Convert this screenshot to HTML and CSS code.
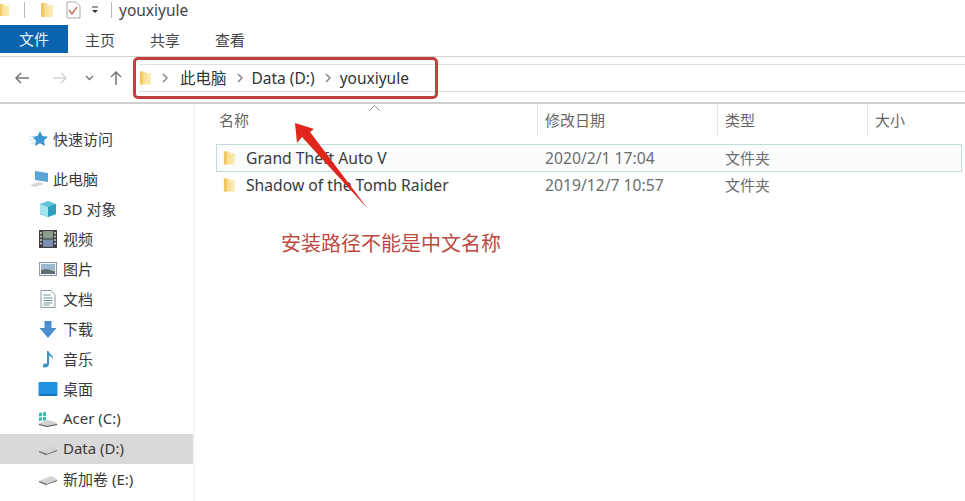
FILE: index.html
```html
<!DOCTYPE html>
<html lang="zh-CN">
<head>
<meta charset="UTF-8">
<meta name="viewport" content="width=device-width, initial-scale=1.0">
<title>youxiyule</title>
<link rel="stylesheet" href="styles.css">
</head>
<body>
  <svg class="defs" width="0" height="0">
    <defs>
      <linearGradient id="folderFill" x1="0" x2="1" y1="0" y2="0">
        <stop offset="0" stop-color="#f5d77e"/>
        <stop offset="1" stop-color="#fbeebb"/>
      </linearGradient>
      <symbol id="folder" viewBox="0 0 14 16">
        <path d="M1 1h6l1 2h5v12H1z" fill="url(#folderFill)"/>
        <path d="M1 1h3v14H1z" fill="#eec55f"/>
      </symbol>
      <symbol id="drive" viewBox="0 0 20 12">
        <path d="M1 8l12-5 6 3v2L8 11z" fill="#d4d4d4"/>
        <path d="M1 8l8 3 10-4v1L8 12 1 9z" fill="#555"/>
      </symbol>
      <symbol id="chev" viewBox="0 0 6 10">
        <path d="M1 1l4 4-4 4" fill="none" stroke="#858585" stroke-width="1.5"/>
      </symbol>
    </defs>
  </svg>

  <header class="titlebar">
    <svg class="qa-folder-cut" width="12" height="16"><use href="#folder"/></svg>
    <span class="qa-sep"></span>
    <svg class="qa-folder" width="14" height="16"><use href="#folder"/></svg>
    <svg class="qa-check" width="15" height="18" viewBox="0 0 15 18">
      <path d="M1 1h9l4 4v12H1z" fill="#fff" stroke="#aaa"/>
      <path d="M3 9l3 4 5-7" fill="none" stroke="#c9735f" stroke-width="1.4"/>
    </svg>
    <svg class="qa-drop" width="8" height="8" viewBox="0 0 8 8">
      <path d="M1 1h6" stroke="#333"/>
      <path d="M1 4h6L4 7z" fill="#333"/>
    </svg>
    <span class="qa-sep"></span>
    <span class="window-title">youxiyule</span>
  </header>

  <nav class="ribbon">
    <span class="tab tab-file">文件</span>
    <span class="tab tab-home">主页</span>
    <span class="tab tab-share">共享</span>
    <span class="tab tab-view">查看</span>
  </nav>

  <div class="addressbar">
    <svg class="nav-btn nav-back" width="16" height="14" viewBox="0 0 16 14">
      <path d="M15 7H2M7 2L2 7l5 5" fill="none" stroke="#777" stroke-width="1.5"/>
    </svg>
    <svg class="nav-btn nav-forward" width="16" height="14" viewBox="0 0 16 14">
      <path d="M1 7h13M9 2l5 5-5 5" fill="none" stroke="#d4d4d4" stroke-width="1.5"/>
    </svg>
    <svg class="nav-btn nav-down" width="9" height="6" viewBox="0 0 9 6">
      <path d="M1 1l3.5 3.500L8 1" fill="none" stroke="#777" stroke-width="1.4"/>
    </svg>
    <svg class="nav-btn nav-up" width="14" height="16" viewBox="0 0 14 16">
      <path d="M7 15V2M2 7l5-5 5 5" fill="none" stroke="#777" stroke-width="1.5"/>
    </svg>
    <div class="crumbs">
      <svg class="crumb-folder" width="13" height="16"><use href="#folder"/></svg>
      <svg class="chev" width="6" height="10"><use href="#chev"/></svg>
      <span class="crumb">此电脑</span>
      <svg class="chev" width="6" height="10"><use href="#chev"/></svg>
      <span class="crumb">Data (D:)</span>
      <svg class="chev" width="6" height="10"><use href="#chev"/></svg>
      <span class="crumb">youxiyule</span>
    </div>
  </div>

  <main class="explorer">
    <aside class="sidebar">
      <div class="nav-item top first">
        <svg class="nav-icon" width="20" height="18" viewBox="0 0 20 18">
          <path d="M11 1l2.400 5 5.600.7-4 3.900 1 5.400-5-2.700-5 2.700 1-5.400-4-3.900 5.600-.7z" fill="#3d97d3"/>
          <path d="M0 7h6M1 10h5M2 13h4" stroke="#bfe0f2"/>
        </svg>
        <span>快速访问</span>
      </div>
      <div class="nav-item top second">
        <svg class="nav-icon" width="20" height="18" viewBox="0 0 20 18">
          <path d="M6 1l13 2v9L6 10z" fill="#5aa5d8"/>
          <path d="M1 15l9-3 5 2-9 3z" fill="#d5d5d5"/>
        </svg>
        <span>此电脑</span>
      </div>
      <div class="nav-item">
        <svg class="nav-icon" width="18" height="18" viewBox="0 0 18 18">
          <path d="M9 1l8 3v10l-8 3-8-3V4z" fill="#5cc3d8"/>
          <path d="M1 4l8 3 8-3v10l-8 3-8-3z" fill="#2f9fbd"/>
          <path d="M1 4l8 3v10l-8-3z" fill="#a5e3ee"/>
        </svg>
        <span>3D 对象</span>
      </div>
      <div class="nav-item">
        <svg class="nav-icon" width="18" height="18" viewBox="0 0 18 18">
          <rect width="18" height="18" fill="#3d3d3d"/>
          <rect x="4" y="1" width="10" height="7.500" fill="#8a9a8c"/>
          <rect x="4" y="9.500" width="10" height="7.500" fill="#7d8fae"/>
          <path d="M2 2v14M16 2v14" stroke="#ddd" stroke-width="1.500" stroke-dasharray="2 1.500"/>
        </svg>
        <span>视频</span>
      </div>
      <div class="nav-item">
        <svg class="nav-icon" width="18" height="14" viewBox="0 0 18 14">
          <rect x=".5" y=".5" width="17" height="13" fill="#f2f5f7" stroke="#8f9aa3"/>
          <rect x="2" y="2" width="14" height="6" fill="#9cb8cf"/>
          <path d="M2 12V8l5-1 9 2v3z" fill="#5c6e70"/>
        </svg>
        <span>图片</span>
      </div>
      <div class="nav-item">
        <svg class="nav-icon" width="15" height="18" viewBox="0 0 15 18">
          <path d="M.5.500h10l4 4v13H.500z" fill="#fafafa" stroke="#8f9aa3"/>
          <path d="M3 5h7M3 8h9M3 10.500h9M3 13h9M3 15h6" stroke="#6e9a96"/>
        </svg>
        <span>文档</span>
      </div>
      <div class="nav-item">
        <svg class="nav-icon" width="17" height="17" viewBox="0 0 17 17">
          <path d="M5 0h7v7h5l-8.500 10L0 7h5z" fill="#4a8fd0"/>
        </svg>
        <span>下载</span>
      </div>
      <div class="nav-item">
        <svg class="nav-icon" width="12" height="18" viewBox="0 0 12 18">
          <path d="M5 1h1.500c.5 3 5 4 4.500 8-1-2-2.500-3-4-3v8.500C6.500 16.500 4.500 18 2.500 17.500 0 17 .500 14 3 13.500c.8-.2 1.500-.1 2 .2z" fill="#3f93c4"/>
        </svg>
        <span>音乐</span>
      </div>
      <div class="nav-item">
        <svg class="nav-icon" width="19" height="14" viewBox="0 0 19 14">
          <rect width="19" height="14" rx="1" fill="#1f8fe0"/>
          <path d="M1 13h17" stroke="#0d4f86"/>
        </svg>
        <span>桌面</span>
      </div>
      <div class="nav-item">
        <svg class="nav-icon" width="20" height="16" viewBox="0 0 20 16">
          <path d="M1 2l3-.5V5L1 5.500zM5 1.300L8 1v4l-3 .200zM1 6.500L4 6v3.500l-3 .500zM5 6h3v3.500L5 9.700z" fill="#3fb8b0"/>
          <path d="M1 12l10-3 8 3v2l-10 2-8-2z" fill="#cfcfcf"/>
          <path d="M1 13l8 2 10-2v1l-10 2-8-2z" fill="#555"/>
        </svg>
        <span>Acer (C:)</span>
      </div>
      <div class="nav-item selected">
        <svg class="nav-icon" width="20" height="12"><use href="#drive"/></svg>
        <span>Data (D:)</span>
      </div>
      <div class="nav-item">
        <svg class="nav-icon" width="20" height="12"><use href="#drive"/></svg>
        <span>新加卷 (E:)</span>
      </div>
    </aside>

    <section class="files">
      <div class="sort-caret">
        <svg width="11" height="6" viewBox="0 0 11 6"><path d="M.5 5.500l5-5 5 5" fill="none" stroke="#888"/></svg>
      </div>
      <div class="file-grid head">
        <span class="col">名称</span>
        <span class="col">修改日期</span>
        <span class="col">类型</span>
        <span class="col">大小</span>
      </div>
      <div class="file-grid row current">
        <span class="file-name"><svg width="13" height="16"><use href="#folder"/></svg>Grand Theft Auto V</span>
        <span class="dim date">2020/2/1 17:04</span>
        <span class="dim kind">文件夹</span>
        <span></span>
      </div>
      <div class="file-grid row">
        <span class="file-name"><svg width="13" height="16"><use href="#folder"/></svg>Shadow of the Tomb Raider</span>
        <span class="dim date">2019/12/7 10:57</span>
        <span class="dim kind">文件夹</span>
        <span></span>
      </div>
    </section>
  </main>

  <!-- red annotation drawn on top of the screenshot -->
  <div class="mark-box"></div>
  <svg class="mark-arrow" width="80" height="95" viewBox="0 0 80 95">
    <path d="M1 1l19 6-4 3 58 77-66-72-5 6z" fill="#e0251b"/>
  </svg>
  <p class="mark-note">安装路径不能是中文名称</p>
</body>
</html>
```

FILE: styles.css
```css
* {
  box-sizing: border-box;
}

html, body {
  margin: 0;
  height: 501px;
  overflow: hidden;
  background: #fff;
}

body {
  position: relative;
  font-family: "Noto Sans", "Noto Sans CJK SC", sans-serif;
  font-size: 15px;
  color: #333;
}

.defs {
  position: absolute;
}

svg {
  display: block;
  flex: none;
}

/* title bar */
.titlebar {
  display: flex;
  align-items: center;
  height: 25px;
  padding-bottom: 6px;
  overflow: hidden;
}

.qa-folder-cut {
  margin-left: -2px;
}

.qa-sep {
  width: 1px;
  height: 16px;
  margin-left: 14px;
  background: #bbb;
}

.qa-folder {
  margin-left: 15px;
}

.qa-check {
  margin-left: 12px;
}

.qa-drop {
  margin-left: 10px;
}

.titlebar .qa-sep:nth-of-type(2) {
  margin-left: 12px;
}

.window-title {
  margin-left: 7px;
  font-size: 15.500px;
  color: #444;
}

/* ribbon tabs */
.ribbon {
  display: flex;
  align-items: center;
  height: 32px;
  border-bottom: 1px solid #d4d4d4;
  padding-bottom: 3px;
}

.tab {
  font-size: 15px;
  color: #444;
}

.tab-file {
  width: 68px;
  height: 28px;
  line-height: 28px;
  text-align: center;
  color: #e8f2fa;
  background: #0a63ad;
}

.tab-home {
  margin-left: 17px;
}

.tab-share,
.tab-view {
  margin-left: 35px;
}

/* address bar */
.addressbar {
  display: flex;
  align-items: center;
  height: 47px;
  padding-bottom: 4px;
  border-bottom: 2px solid #cfcfcf;
}

.nav-back {
  margin-left: 14px;
}

.nav-forward {
  margin-left: 22px;
}

.nav-down {
  margin-left: 17px;
}

.nav-up {
  margin-left: 15px;
}

.crumbs {
  display: flex;
  align-items: center;
  flex: 1;
  height: 28px;
  margin-left: 16px;
  border-top: 1px solid #dedede;
  border-bottom: 1px solid #dedede;
}

.chev {
  margin: 0 9px 0 10px;
}

.crumb {
  font-size: 15.500px;
  color: #333;
}

.chev:nth-of-type(2) + .crumb {
  margin-left: 3px;
}

/* main area */
.explorer {
  display: flex;
  height: 397px;
}

.sidebar {
  width: 193px;
  margin-right: 2px;
  padding-top: 20px;
  box-shadow: 2px 0 0 #f6f6f6;
}

.nav-item {
  display: flex;
  align-items: center;
  height: 30px;
  padding-left: 38px;
  font-size: 15px;
  color: #3a3a3a;
}

.nav-item span {
  margin-bottom: 2px;
}

.nav-icon {
  width: 20px;
  margin-right: 5px;
}

.nav-item.top {
  padding-left: 29px;
}

.nav-item.top .nav-icon {
  margin-right: 4px;
}

.nav-item.second {
  margin-top: 10px;
}

.selected {
  background: #d9d9d9;
}

/* file list */
.files {
  position: relative;
  flex: 1;
  min-width: 0;
}

.sort-caret {
  position: absolute;
  top: 1px;
  left: 174px;
}

.file-grid {
  display: grid;
  grid-template-columns: 321px 180px 150px 1fr;
  margin-left: 21px;
  margin-right: 3px;
}

.head {
  height: 40px;
  align-items: start;
  font-size: 15px;
  color: #666;
}

.col {
  height: 32px;
  line-height: 32px;
  padding-left: 7px;
  border-left: 1px solid #e8e8e8;
}

.col:first-child {
  padding-left: 3px;
  border-left: 0;
}

.row {
  height: 26px;
  align-items: center;
  font-size: 15px;
}

.current {
  height: 28px;
  outline: 1px solid #c5dade;
  outline-offset: -1px;
  background: #fbfdfd;
}

.row > span:not(:first-child) {
  padding-left: 8px;
}

.file-name {
  display: flex;
  align-items: center;
  gap: 10px;
  padding-left: 7px;
  font-size: 15.700px;
  color: #3a3a3a;
}

.dim {
  color: #6d6d6d;
}

.date {
  font-size: 15.700px;
}

.kind {
  margin-bottom: 2px;
}

/* annotation */
.mark-box {
  position: absolute;
  left: 133px;
  top: 57px;
  width: 305px;
  height: 42px;
  border: 3px solid #c0403c;
  border-radius: 5px;
}

.mark-arrow {
  position: absolute;
  left: 294px;
  top: 122px;
}

.mark-note {
  position: absolute;
  left: 281px;
  top: 231px;
  margin: 0;
  font-size: 20px;
  line-height: 26px;
  color: #bc4a40;
}
```
